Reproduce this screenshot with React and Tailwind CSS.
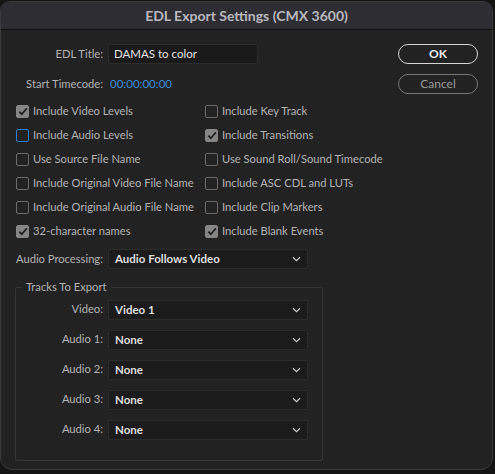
import { useState } from "react";

/* ── Small pieces ───────────────────────────────────────────── */
const Chevron = () => (
  <svg width="9" height="6" viewBox="0 0 9 6" className="shrink-0">
    <path d="M1 1.2 L4.5 4.6 L8 1.2" fill="none" stroke="#c8c8c8" strokeWidth="1.2" />
  </svg>
);

const Check = ({ label, checked, focused }) => {
  let box = "border-[1.5px] border-[#6b6b6b] bg-transparent";
  if (checked) box = "bg-[#858585] border-[1.5px] border-[#858585]";
  if (focused) box = "border-[1.5px] border-[#2f7fd9] bg-transparent";
  return (
    <div className="flex h-[24px] items-center">
      <span className={`flex h-[13px] w-[13px] shrink-0 items-center justify-center rounded-[2px] ${box}`}>
        {checked && (
          <svg width="10" height="9" viewBox="0 0 10 9">
            <path d="M1.3 4.6 L3.8 7.2 L8.8 1.4" fill="none" stroke="#1e1e1e" strokeWidth="1.7" />
          </svg>
        )}
      </span>
      <span className="ml-[4px] whitespace-nowrap text-[11.2px] text-[#b3b3b3]">{label}</span>
    </div>
  );
};

const Select = ({ value }) => (
  <div className="flex h-[20px] w-[200px] items-center justify-between rounded-[2px] border border-[#2c2c2c] bg-[#1b1b1b] pl-[6px] pr-[6px]">
    <span className="text-[11.5px] font-bold text-[#dedede]">{value}</span>
    <Chevron />
  </div>
);

const Row = ({ label, labelW, children, className = "" }) => (
  <div className={`flex items-center ${className}`}>
    <span
      className="whitespace-nowrap pr-[5px] text-right text-[11.2px] text-[#b3b3b3]"
      style={{ width: labelW }}
    >
      {label}
    </span>
    {children}
  </div>
);

const leftChecks = [
  ["Include Video Levels", true],
  ["Include Audio Levels", false, true],
  ["Use Source File Name", false],
  ["Include Original Video File Name", false],
  ["Include Original Audio File Name", false],
  ["32-character names", true],
];

const rightChecks = [
  ["Include Key Track", false],
  ["Include Transitions", true],
  ["Use Sound Roll/Sound Timecode", false],
  ["Include ASC CDL and LUTs", false],
  ["Include Clip Markers", false],
  ["Include Blank Events", true],
];

/* ── App ─────────────────────────────────────────────────────── */
export default function App() {
  const [title] = useState("DAMAS to color");

  return (
    <div
      className="h-[474px] w-[495px] overflow-hidden bg-[#141414] pt-[1px]"
      style={{ fontFamily: "Lato, 'Open Sans', sans-serif" }}
    >
      <div className="h-[469px] w-[493px] overflow-hidden rounded-t-[10px] rounded-b-[12px] border border-[#3b3b3e] bg-[#222222]">
        {/* Title bar */}
        <div className="flex h-[28px] items-center justify-center border-b border-[#0f0f10] bg-[#2e2d33]">
          <span className="text-[14px] font-bold text-[#b9b8be]">
            EDL Export Settings (CMX 3600)
          </span>
        </div>

        {/* Top section */}
        <div className="flex pt-[14px]">
          <div className="flex flex-1 flex-col gap-[10px]">
            <Row label="EDL Title:" labelW={107}>
              <div className="flex h-[20px] w-[150px] items-center rounded-[2px] border border-[#2c2c2c] bg-[#1a1a1a] pl-[5px] text-[11.5px] text-[#e2e2e2]">
                {title}
              </div>
            </Row>
            <Row label="Start Timecode:" labelW={107} className="h-[20px]">
              <span className="pl-[2px] text-[11.5px] text-[#3f8fd8]">00:00:00:00</span>
            </Row>
          </div>
          <div className="flex flex-col gap-[10px] pr-[14px]">
            <button className="h-[20px] w-[80px] rounded-full border-[1.5px] border-[#d6d6d6] text-[12px] font-bold text-[#ececec]">
              OK
            </button>
            <button className="h-[20px] w-[80px] rounded-full border-[1.5px] border-[#777777] text-[12px] text-[#9a9a9a]">
              Cancel
            </button>
          </div>
        </div>

        {/* Checkboxes */}
        <div className="mt-[5px] grid grid-cols-[189px_1fr] pl-[15px]">
          <div className="flex flex-col">
            {leftChecks.map(([l, c, f]) => (
              <Check key={l} label={l} checked={c} focused={f} />
            ))}
          </div>
          <div className="flex flex-col">
            {rightChecks.map(([l, c]) => (
              <Check key={l} label={l} checked={c} />
            ))}
          </div>
        </div>

        {/* Audio processing */}
        <Row label="Audio Processing:" labelW={107} className="mt-[6px]">
          <Select value="Audio Follows Video" />
        </Row>

        {/* Tracks to export */}
        <fieldset className="ml-[14px] mt-[10px] h-[182px] w-[308px] rounded-[2px] border border-[#363636]">
          <legend className="ml-[6px] px-[4px] text-[11.2px] text-[#b3b3b3]">Tracks To Export</legend>
          <div className="mt-[4px] flex flex-col gap-[10px]">
            <Row label="Video:" labelW={92}>
              <Select value="Video 1" />
            </Row>
            {["Audio 1:", "Audio 2:", "Audio 3:", "Audio 4:"].map((a) => (
              <Row key={a} label={a} labelW={92}>
                <Select value="None" />
              </Row>
            ))}
          </div>
        </fieldset>
      </div>
    </div>
  );
}
